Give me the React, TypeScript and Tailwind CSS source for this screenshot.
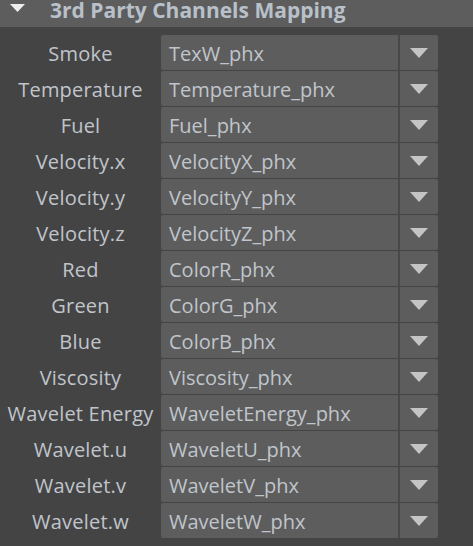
import React from 'react';

const channels: [string, string][] = [
    ['Smoke', 'TexW_phx'],
    ['Temperature', 'Temperature_phx'],
    ['Fuel', 'Fuel_phx'],
    ['Velocity.x', 'VelocityX_phx'],
    ['Velocity.y', 'VelocityY_phx'],
    ['Velocity.z', 'VelocityZ_phx'],
    ['Red', 'ColorR_phx'],
    ['Green', 'ColorG_phx'],
    ['Blue', 'ColorB_phx'],
    ['Viscosity', 'Viscosity_phx'],
    ['Wavelet Energy', 'WaveletEnergy_phx'],
    ['Wavelet.u', 'WaveletU_phx'],
    ['Wavelet.v', 'WaveletV_phx'],
    ['Wavelet.w', 'WaveletW_phx'],
];

const DownArrow = ({ className }: { className?: string }) => (
    <svg width="18" height="10" viewBox="0 0 18 10" className={className}>
        <path d="M0 0 H18 L9 10 Z" fill="currentColor" />
    </svg>
);

const App: React.FC = () => {
    return (
        <div className="w-[473px] h-[546px] bg-[#444444] overflow-hidden font-['Open_Sans',sans-serif]">
            {/* Section header */}
            <div className="h-[27px] bg-[#5d5d5d] flex items-start">
                <svg width="15" height="8" viewBox="0 0 15 8" className="ml-[10px] mt-[4px] text-[#eeeeee]">
                    <path d="M0 0 H15 L7.5 8 Z" fill="currentColor" />
                </svg>
                <span className="ml-[25px] text-[21px] font-bold text-[#b8c0ca] leading-[20px] whitespace-nowrap">
                    3rd Party Channels Mapping
                </span>
            </div>

            {/* Channel rows */}
            <div className="pt-[8px] flex flex-col gap-[1px]">
                {channels.map(([label, value]) => (
                    <div key={label} className="flex items-center h-[35px]">
                        <div className="w-[161px] text-center text-[20px] tracking-[0.2px] text-[#c0c5cc] whitespace-nowrap pt-[2px]">
                            {label}
                        </div>
                        <div className="w-[277px] h-full flex bg-[#5d5d5d] rounded-[2px]">
                            <div className="flex-1 flex items-center pl-[8px] pt-[2px] text-[20px] text-[#c0c5cc] whitespace-nowrap">
                                {value}
                            </div>
                            <div className="w-[2px] bg-[#484848]" />
                            <div className="w-[38px] flex items-center justify-center text-[#c4c4c4]">
                                <DownArrow />
                            </div>
                        </div>
                    </div>
                ))}
            </div>
        </div>
    );
};

export default App;
